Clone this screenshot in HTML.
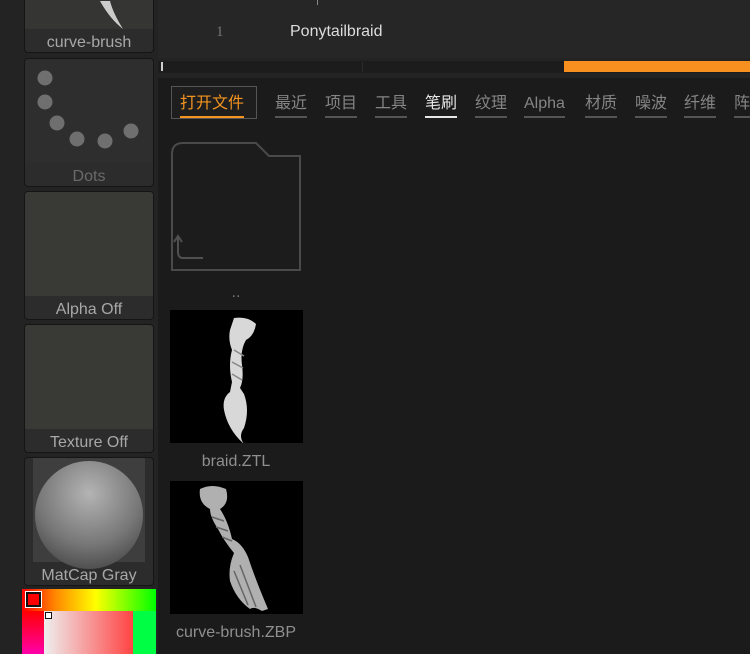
<!DOCTYPE html>
<html><head><meta charset="utf-8"><style>
*{margin:0;padding:0;box-sizing:border-box}
body{width:750px;height:672px;background:#fff;position:relative;overflow:hidden;font-family:"Liberation Sans","Noto Sans CJK SC",sans-serif}
#app{position:absolute;left:0;top:0;width:750px;height:654px;background:#232323;overflow:hidden}
.tile{position:absolute;left:24px;width:130px;background:#2c2c2c;border:1px solid #151515;border-radius:4px;overflow:hidden}
.tile .img{position:absolute;left:0;top:0;right:0;background:#393936}
.tile .lab{position:absolute;left:0;right:0;bottom:-3px;height:23px;text-align:center;color:#a8a8a8;font-size:16px;line-height:22px}
.abs{position:absolute}
.tab{position:absolute;top:94px;font-size:16px;color:#858585;line-height:20px;border-bottom:2px solid #555;padding-bottom:2px;white-space:nowrap}
.fl{position:absolute;color:#8f8f8f;font-size:16px;text-align:center;width:150px}
</style></head><body><div id="app">
<div class="abs" style="left:158px;top:0;width:592px;height:58px;background:#262626"></div>
<div class="abs" style="left:216px;top:24px;color:#777;font-size:15px;font-family:'Liberation Serif',serif">1</div>
<div class="abs" style="left:290px;top:23px;color:#ddd;font-size:16px">Ponytailbraid</div>
<div class="abs" style="left:317px;top:0;width:1px;height:5px;background:#888"></div>
<div class="abs" style="left:158px;top:61px;width:592px;height:12px;background:#1c1c1c"></div>
<div class="abs" style="left:161px;top:62px;width:2px;height:9px;background:#ccc"></div>
<div class="abs" style="left:362px;top:62px;width:1px;height:10px;background:#2c2c2c"></div>
<div class="abs" style="left:564px;top:61px;width:186px;height:11px;background:#f7901e"></div>
<div class="abs" style="left:158px;top:78px;width:592px;height:576px;background:#1b1b1b"></div>
<div class="abs" style="left:171px;top:86px;width:86px;height:33px;border:1px solid #555;background:#1e1e1e"></div>
<div class="tab" style="left:180px;color:#f39420;border-bottom-color:#f39420">打开文件</div>
<div class="tab" style="left:275px">最近</div>
<div class="tab" style="left:325px">项目</div>
<div class="tab" style="left:375px">工具</div>
<div class="tab" style="left:425px;color:#e6e6e6;border-bottom-color:#e6e6e6">笔刷</div>
<div class="tab" style="left:475px">纹理</div>
<div class="tab" style="left:524px">Alpha</div>
<div class="tab" style="left:585px">材质</div>
<div class="tab" style="left:635px">噪波</div>
<div class="tab" style="left:684px">纤维</div>
<div class="tab" style="left:734px">阵列</div>
<svg class="abs" style="left:170px;top:140px" width="134" height="134"><path d="M2 14 Q2 3 13 3 H86 L99 16 H130 V130 H2 Z" fill="#1c1c1c" stroke="#4a4a4a" stroke-width="2"/><path d="M33 118 H13 Q8 118 8 112 V97 M4 102 L8 96 L12 102" fill="none" stroke="#505050" stroke-width="2"/></svg>
<div class="fl" style="left:161px;top:284px;color:#777">..</div>
<div class="abs" style="left:170px;top:310px;width:133px;height:133px;background:#000"></div>
<svg class="abs" style="left:170px;top:310px" width="133" height="133">
<path d="M64 8 Q78 6 86 14 Q84 26 76 30 Q70 40 72 55 Q74 70 70 78 L74 84 Q80 100 74 118 Q68 126 74 134 Q58 120 54 100 Q52 88 60 82 L62 72 Q58 55 62 40 Q58 30 60 20 Z" fill="#d8d8d8"/>
<path d="M64 40 L74 46 M62 52 L73 58 M62 64 L72 70" stroke="#888" stroke-width="1.5"/>
</svg>
<div class="fl" style="left:161px;top:453px">braid.ZTL</div>
<div class="abs" style="left:170px;top:481px;width:133px;height:133px;background:#000"></div>
<svg class="abs" style="left:170px;top:481px" width="133" height="133">
<path d="M30 8 Q42 2 56 8 Q60 22 50 28 Q58 40 62 58 Q72 62 78 76 Q86 100 98 128 L92 130 Q84 125 80 128 Q66 118 60 100 Q58 86 64 72 Q54 60 48 48 Q40 36 40 28 Q28 22 30 8 Z" fill="#b0b0b0"/>
<path d="M42 36 L54 40 M46 46 L58 50 M52 56 L62 60 M70 84 L86 126 M64 90 L78 124" stroke="#666" stroke-width="1.5"/>
</svg>
<div class="fl" style="left:161px;top:624px">curve-brush.ZBP</div>
<div class="tile" style="top:-80px;height:133px"><div class="img" style="height:108px;background:#353533"></div>
<svg class="abs" style="left:60px;top:80px" width="60" height="30"><path d="M15 0 Q25 18 38 28 Q28 12 25 0 Z" fill="#ccc"/></svg>
<div class="lab">curve-brush</div></div>
<div class="tile" style="top:58px;height:129px"><div class="img" style="height:104px;background:#2e2e2e"></div>
<svg class="abs" style="left:0;top:0" width="130" height="104" fill="#6f6f6f"><circle cx="20" cy="19" r="7.5"/><circle cx="20" cy="43" r="7.5"/><circle cx="32" cy="64" r="7.5"/><circle cx="52" cy="80" r="7.5"/><circle cx="80" cy="82" r="7.5"/><circle cx="106" cy="72" r="7.5"/></svg>
<div class="lab" style="color:#6a6a6a">Dots</div></div>
<div class="tile" style="top:191px;height:129px"><div class="img" style="height:104px"></div><div class="lab">Alpha Off</div></div>
<div class="tile" style="top:324px;height:129px"><div class="img" style="height:104px"></div><div class="lab">Texture Off</div></div>
<div class="tile" style="top:457px;height:129px"><div class="img" style="left:8px;right:8px;height:104px;background:#3e3e3e"></div>
<div class="abs" style="left:10px;top:3px;width:108px;height:108px;border-radius:50%;background:radial-gradient(circle at 50% 30%,#b4b4b4,#777 55%,#4a4a4a 85%)"></div>
<div class="lab">MatCap Gray</div></div>
<div class="abs" style="left:22px;top:589px;width:134px;height:65px;background:linear-gradient(to right,#f00,#f80 25%,#ff0 55%,#0f0 100%)"></div>
<div class="abs" style="left:22px;top:611px;width:22px;height:43px;background:linear-gradient(#f00,#f0a)"></div>
<div class="abs" style="left:133px;top:611px;width:23px;height:43px;background:#0f4"></div>
<div class="abs" style="left:44px;top:611px;width:89px;height:43px;background:linear-gradient(to right,#eee,#f44)"></div>
<div class="abs" style="left:26px;top:592px;width:15px;height:15px;background:#f00;border:2px solid #111;outline:1px solid #fff"></div>
<div class="abs" style="left:45px;top:612px;width:7px;height:7px;background:#fff;border:1px solid #111"></div>
</div></body></html>
